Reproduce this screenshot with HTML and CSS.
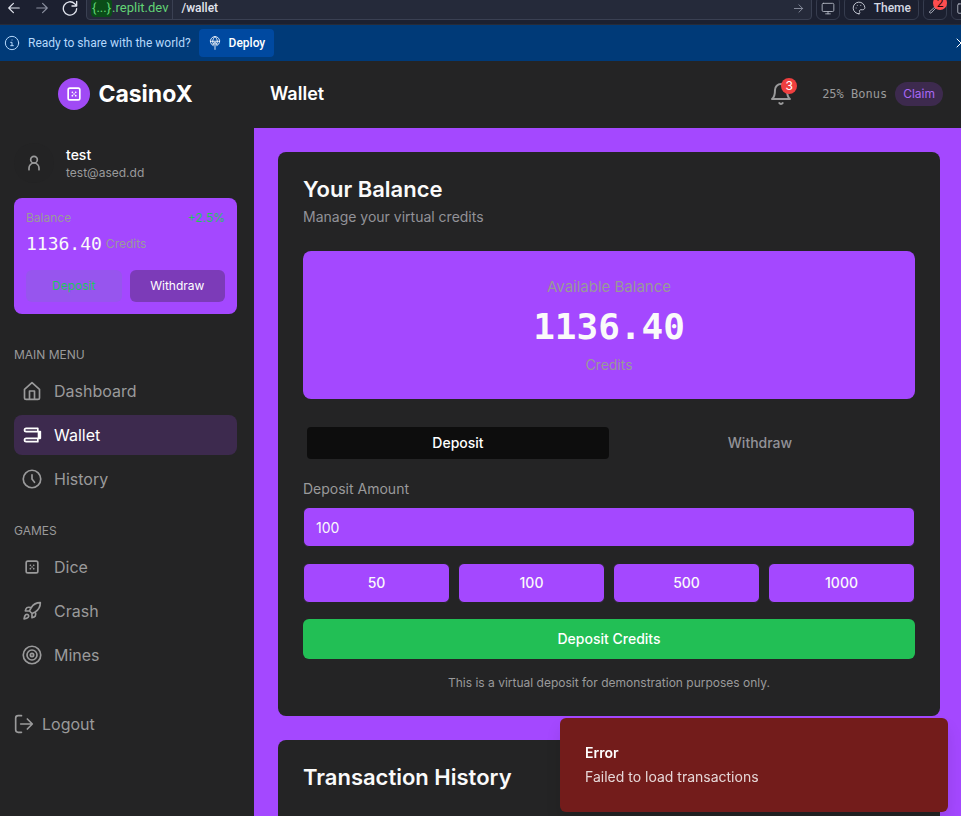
FILE: index.html
```html
<!DOCTYPE html>
<html lang="en">
<head>
<meta charset="utf-8">
<title>CasinoX - Wallet</title>
<link rel="stylesheet" href="styles.css">
</head>
<body>
<div class="toolbar">
  <div class="history">
    <button aria-label="Back"><svg width="14" height="14" viewBox="0 0 24 24"><path d="M21 12H3M11 4l-8 8 8 8"/></svg></button>
    <button class="dim" aria-label="Forward"><svg width="14" height="14" viewBox="0 0 24 24"><path d="M3 12h18M13 4l8 8-8 8"/></svg></button>
    <button aria-label="Reload"><svg width="16" height="16" viewBox="0 0 24 24"><path d="M22 2v7h-7M22 9l-3-3.500A10 10 0 1 0 22 13"/></svg></button>
  </div>
  <div class="address">
    <span class="host"><span class="sub">{...}</span>.replit.dev</span>
    <input class="path" aria-label="Path" value="/wallet">
    <button class="go" aria-label="Go"><svg width="11" height="11" viewBox="0 0 24 24"><path d="M3 12h18M13 4l8 8-8 8"/></svg></button>
  </div>
  <button class="tool" aria-label="Device"><svg width="14" height="14" viewBox="0 0 24 24"><rect x="2" y="4" width="20" height="14" rx="2"/><path d="M8 22h8M12 18v4"/></svg></button>
  <button class="tool theme"><svg width="14" height="14" viewBox="0 0 24 24"><path d="M12 22A10 10 0 1 1 22 11c0 3-2 4-4 4h-3c-2 0-3 2-2 3.500s0 3.500-1 3.500z"/><path d="M7 12h.1M9 7.500h.1M15 7.500h.1"/></svg>Theme</button>
  <button class="tool" aria-label="Dev tools"><svg width="14" height="14" viewBox="0 0 24 24"><path d="M14 6.500a5 5 0 0 1 7-3l-3 3 1 2 2-1a5 5 0 0 1-7 4L5 21l-3-2 10-9a5 5 0 0 1 2-3.500z"/></svg><span class="count">2</span></button>
  <button class="tool" aria-label="Open in new tab"><svg width="14" height="14" viewBox="0 0 24 24"><rect x="3" y="5" width="16" height="16" rx="2"/></svg></button>
</div>
<div class="banner">
  <svg class="info" width="16" height="16" viewBox="0 0 24 24"><circle cx="12" cy="12" r="10"/><path d="M10 11h2v5M10 16h4M12 7.500h.1"/></svg>
  <span>Ready to share with the world?</span>
  <button class="deploy"><svg width="14" height="14" viewBox="0 0 24 24"><path d="M9 16.500a8 8 0 1 1 6 0M4 9h16M12 1c-5 5-5 10-2 14M12 1c5 5 5 10 2 14M12 11v12M9 14l3-3 3 3"/></svg>Deploy</button>
  <button class="dismiss" aria-label="Dismiss"><svg width="10" height="10" viewBox="0 0 10 10"><path d="M1 1l8 8M9 1L1 9"/></svg></button>
</div>
<div class="app">
  <aside class="sidebar">
    <div class="brand">
      <span class="logo"><svg width="20" height="20" viewBox="0 0 24 24"><rect x="5" y="5" width="14" height="14" rx="2"/><path d="M10 10h.1M14 10h.1M12 12h.1M10 14h.1M14 14h.1"/></svg></span>
      <span>CasinoX</span>
    </div>
    <div class="user">
      <span class="avatar"><svg width="20" height="20" viewBox="0 0 24 24"><circle cx="12" cy="8" r="4"/><path d="M6 20v-2a6 6 0 0 1 12 0v2"/></svg></span>
      <div><div class="name">test</div><div class="mail">test@ased.dd</div></div>
    </div>
    <section class="mini">
      <div class="mini-top"><span>Balance</span><span class="gain">+2.5%</span></div>
      <div class="mini-amount"><strong>1136.40</strong><span>Credits</span></div>
      <div class="mini-actions"><button class="dep">Deposit</button><button class="wd">Withdraw</button></div>
    </section>
    <nav>
      <h2>MAIN MENU</h2>
      <a href="#dashboard"><svg width="20" height="20" viewBox="0 0 24 24"><path d="M3 10l9-8 9 8v10a2 2 0 0 1-2 2H5a2 2 0 0 1-2-2zM9 22V12h6v10"/></svg>Dashboard</a>
      <a href="#wallet" class="active"><svg width="20" height="20" viewBox="0 0 24 24"><path d="M19 8V4H5a2 2 0 0 0 0 4h15v8M19 16v4H5a2 2 0 0 1 0-4h15"/><path d="M20 8h2v8h-2z" fill="currentColor"/></svg>Wallet</a>
      <a href="#history"><svg width="20" height="20" viewBox="0 0 24 24"><circle cx="12" cy="12" r="10.500"/><path d="M12 7v5l3 4"/></svg>History</a>
      <h2>GAMES</h2>
      <a href="#dice"><svg width="20" height="20" viewBox="0 0 24 24"><rect x="5" y="5" width="14" height="14" rx="2"/><path d="M10 10h.1M14 10h.1M12 12h.1M10 14h.1M14 14h.1"/></svg>Dice</a>
      <a href="#crash"><svg width="20" height="20" viewBox="0 0 24 24"><path d="M4.500 16.500c-1.500 1.260-2 5-2 5s3.740-.5 5-2c.71-.84.7-2.130-.09-2.910a2.180 2.180 0 0 0-2.910-.09zM12 15l-3-3a22 22 0 0 1 2-3.950A12.880 12.880 0 0 1 22 2c0 2.720-.78 7.500-6 11a22.350 22.350 0 0 1-4 2zM9 12H4s.55-3.030 2-4c1.620-1.080 5 0 5 0M12 15v5s3.030-.55 4-2c1.080-1.620 0-5 0-5"/></svg>Crash</a>
      <a href="#mines"><svg width="20" height="20" viewBox="0 0 24 24"><circle cx="12" cy="12" r="10.500"/><circle cx="12" cy="12" r="6"/><circle cx="12" cy="12" r="2"/></svg>Mines</a>
    </nav>
    <button class="logout"><svg width="20" height="20" viewBox="0 0 24 24"><path d="M9 22H5a3 3 0 0 1-3-3V5a3 3 0 0 1 3-3h4M8 12h14M16 6l6 6-6 6"/></svg>Logout</button>
  </aside>
  <div class="content">
    <header>
      <h1>Wallet</h1>
      <button class="bell" aria-label="Notifications"><svg width="24" height="24" viewBox="0 0 24 24"><path d="M6 8a6 6 0 0 1 12 0c0 7 3 9 3 9H3s3-2 3-9M10.300 21a2 2 0 0 0 3.400 0"/></svg><span class="dot">3</span></button>
      <span class="bonus">25% Bonus</span>
      <button class="claim">Claim</button>
    </header>
    <main>
      <section class="card">
        <h2>Your Balance</h2>
        <p class="desc">Manage your virtual credits</p>
        <div class="available">
          <div class="label">Available Balance</div>
          <div class="amount">1136.40</div>
          <div class="unit">Credits</div>
        </div>
        <div class="tabs" role="tablist">
          <button role="tab" aria-selected="true" class="tab on">Deposit</button>
          <button role="tab" aria-selected="false" class="tab">Withdraw</button>
        </div>
        <form>
          <label for="amount">Deposit Amount</label>
          <input id="amount" type="text" value="100">
          <div class="presets">
            <button type="button">50</button><button type="button">100</button><button type="button">500</button><button type="button">1000</button>
          </div>
          <button type="button" class="submit">Deposit Credits</button>
          <p class="note">This is a virtual deposit for demonstration purposes only.</p>
        </form>
      </section>
      <section class="card">
        <h2>Transaction History</h2>
      </section>
    </main>
  </div>
</div>
<div class="toast" role="alert">
  <strong>Error</strong>
  <span>Failed to load transactions</span>
</div>
</body>
</html>
```
FILE: styles.css
```css
* { box-sizing: border-box; margin: 0; padding: 0; }
html, body { height: 100%; }
body {
  display: flex; flex-direction: column; overflow: hidden;
  background: #242425; color: #fafafa;
  font: 14px/20px Inter, "Liberation Sans", sans-serif;
}
button, input { font: inherit; color: inherit; border: 0; background: none; }
button { cursor: pointer; }
a { color: inherit; text-decoration: none; }
svg { flex: none; fill: none; stroke: currentColor; stroke-width: 2; stroke-linecap: round; stroke-linejoin: round; }

.toolbar {
  flex: none; height: 25px; padding: 0 0 4px 6px;
  display: flex; align-items: flex-end; gap: 4px;
  background: #1c2030; color: #e2e5ee; border-bottom: 1px solid #272b38;
  font-family: Roboto, sans-serif; font-size: 12px; line-height: 14px;
}
.history { display: flex; gap: 12px; margin-right: 4px; }
.history button { width: 16px; height: 24px; display: flex; align-items: center; justify-content: center; }
.history .dim, .go { color: #8b90a0; }
.address {
  flex: 1; min-width: 0; height: 24px; display: flex; align-items: center;
  background: #252a3a; border: 1px solid #3a4052; border-radius: 4px;
}
.host {
  height: 22px; padding: 0 4px; display: flex; align-items: center;
  color: #62d275; border-right: 1px solid #3a4052; font-size: 13px; white-space: nowrap;
}
.sub { background: #0a4d18; border-radius: 4px; padding: 2px 1px; }
.path { flex: 1; min-width: 0; padding: 0 8px; font-weight: 500; }
.go { width: 24px; height: 22px; display: flex; align-items: center; justify-content: center; }
.tool {
  position: relative; flex: none; width: 24px; height: 24px; color: #b6bac6;
  display: flex; align-items: center; justify-content: center; gap: 8px;
  border: 1px solid #363c4e; border-radius: 6px;
}
.tool svg { stroke-width: 1.5; }
.tool.theme { width: auto; padding: 0 7px; color: #d5d8e2; font-weight: 500; }
.tool:last-child { margin-right: -14px; }
.count {
  position: absolute; top: -1px; right: -1px; width: 14px; height: 14px;
  border-radius: 7px; background: #ff4d4f; color: #2a0808;
}

.banner {
  flex: none; height: 36px; padding-left: 4px; display: flex; align-items: center; gap: 8px;
  background: #003a78; color: #b5d8fb; font-family: Roboto, sans-serif; font-size: 12px;
}
.deploy {
  height: 28px; padding: 0 9px; display: flex; align-items: center; gap: 7px;
  background: #0049a0; color: #fff; border-radius: 4px; font-weight: 500;
}
.dismiss { margin-left: auto; margin-right: -5px; display: flex; color: #fff; }
.dismiss svg { stroke-width: 1; }
.info, .deploy svg { stroke-width: 1.5; }

.app { flex: 1; min-height: 0; display: flex; color: #9a9a9b; }
.sidebar { flex: none; width: 254px; padding: 0 17px 0 14px; }
.brand {
  height: 66px; display: flex; align-items: center; justify-content: center; gap: 8px;
  color: #fff; font-size: 23px; line-height: 32px; font-weight: 700;
}
.logo { width: 32px; height: 32px; border-radius: 16px; background: #a04af5; display: flex; align-items: center; justify-content: center; }
.user { margin: 16px 0 15px; display: flex; align-items: center; gap: 12px; }
.avatar { width: 40px; height: 40px; border-radius: 20px; background: #232324; display: flex; align-items: center; justify-content: center; }
.name { color: #fff; font-weight: 500; }
.mail { font-size: 12px; line-height: 16px; }
.mini { padding: 12px; border-radius: 8px; background: #a448ff; font-size: 12px; line-height: 16px; }
.mini-top { display: flex; justify-content: space-between; }
.gain { color: #22c55e; }
.mini-amount { margin-top: 4px; display: flex; align-items: center; gap: 4px; }
.mini-amount strong { color: #fafafa; font: 400 18px/28px "DejaVu Sans Mono", monospace; }
.mini-actions { margin-top: 12px; display: grid; grid-template-columns: 1fr 1fr; gap: 8px; }
.mini-actions button { height: 32px; border-radius: 6px; }
.dep { background: #9755ee; color: #22c55e; }
.wd { background: #7c3bb8; color: #fff; }
nav { margin-top: 33px; display: flex; flex-direction: column; gap: 4px; }
nav h2 { font-size: 12px; line-height: 16px; font-weight: 400; margin-bottom: 4px; }
nav a + h2 { margin-top: 20px; }
nav a { height: 40px; padding: 0 8px; display: flex; align-items: center; gap: 12px; border-radius: 8px; font-size: 16px; }
nav a.active { background: #3d2a4e; color: #fff; }
.logout { margin-top: 37px; display: flex; align-items: center; gap: 8px; font-size: 16px; line-height: 24px; }

.content { flex: 1; min-width: 0; display: flex; flex-direction: column; }
header { flex: none; height: 67px; padding: 0 18px 1px 16px; display: flex; align-items: center; }
h1 { flex: 1; color: #fff; font-size: 18px; line-height: 28px; font-weight: 600; }
.bell { position: relative; display: flex; margin-right: 29px; }
.dot {
  position: absolute; top: -4px; right: -4px; width: 16px; height: 16px; border-radius: 8px;
  background: #ef3f3f; color: #fff; font-size: 12px; line-height: 16px;
}
.bonus { font: 12px/16px "DejaVu Sans Mono", monospace; margin-right: 8px; }
.claim { padding: 4px 8px; border-radius: 12px; background: #3d2a4e; color: #a968f5; font-size: 12px; line-height: 16px; }
main { flex: 1; min-height: 0; overflow: hidden; padding: 24px 21px 24px 24px; background: #a448ff; }
.card { padding: 25px; border-radius: 8px; background: #242425; margin-bottom: 24px; }
.card h2 { color: #fafafa; font-size: 22px; line-height: 24px; font-weight: 600; }
.card:last-child { min-height: 320px; }
.desc { margin-top: 6px; color: #929298; }
.available { margin-top: 24px; padding: 24px; border-radius: 8px; background: #a448ff; color: #999; text-align: center; }
.label { font-size: 15px; line-height: 24px; }
.amount { margin: 8px 0; color: #fafafa; font: 700 36px/40px "DejaVu Sans Mono", monospace; }
.tabs { margin: 24px 0 16px; padding: 4px; display: grid; grid-template-columns: 1fr 1fr; }
.tab { height: 32px; border-radius: 4px; font-weight: 500; color: #929298; }
.tab.on { background: #0d0d0d; color: #fff; }
form { display: flex; flex-direction: column; }
form input { height: 40px; margin: 8px 0 16px; padding: 0 12px; }
form input, .presets button { border: 1px solid #242425; border-radius: 6px; background: #a448ff; color: #fafafa; }
.presets { display: grid; grid-template-columns: repeat(4, 1fr); gap: 8px; }
.presets button { height: 40px; font-weight: 500; }
.submit { height: 40px; margin: 16px 0; border-radius: 6px; background: #22bf55; color: #fff; font-weight: 500; }
.note { font-size: 12px; line-height: 16px; text-align: center; }

.toast {
  position: fixed; right: 13px; bottom: 4px; width: 388px; padding: 25px;
  display: flex; flex-direction: column; gap: 4px;
  border-radius: 6px; background: #731c1b; color: #e6d7d7;
  box-shadow: 0 10px 15px rgba(0, 0, 0, .1);
}
.toast strong { color: #fff; font-weight: 600; }
```
